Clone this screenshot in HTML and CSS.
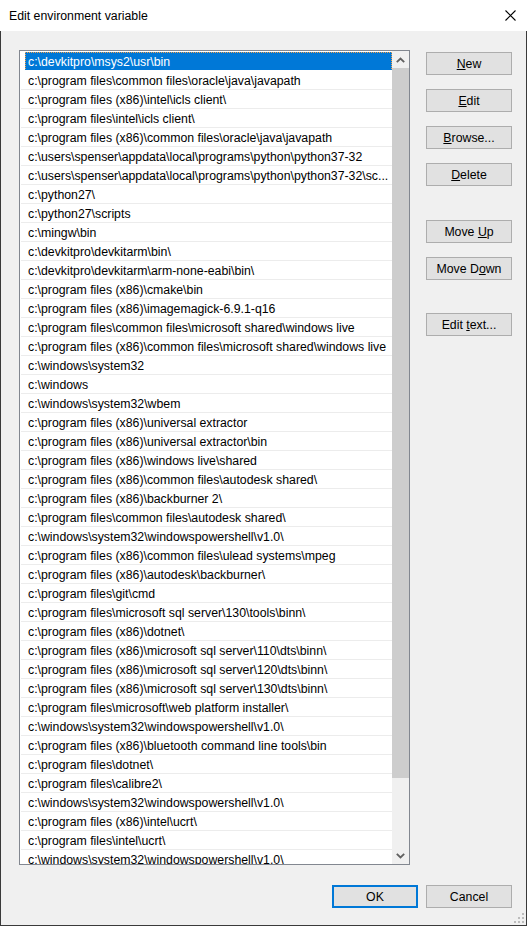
FILE: index.html
```html
<!DOCTYPE html>
<html lang="en">
<head>
  <meta charset="UTF-8" />
  <meta name="viewport" content="width=device-width, initial-scale=1.0" />
  <title>Edit environment variable</title>
  <link rel="stylesheet" href="styles.css">
</head>
<body>
  <div class="window">
    <div class="titlebar">
      <span class="title">Edit environment variable</span>
      <span class="close">
        <svg width="11" height="11" viewBox="0 0 11 11"><path d="M0.5 0.5 L10.5 10.5 M10.5 0.5 L0.5 10.5" stroke="#000" stroke-width="1.1" fill="none"/></svg>
      </span>
    </div>
    <div class="dialog">
      <div class="main">
        <div class="listbox">
          <div class="items">
            <div class="row selected"><div class="cell">c:\devkitpro\msys2\usr\bin</div></div>
            <div class="row"><div class="cell">c:\program files\common files\oracle\java\javapath</div></div>
            <div class="row"><div class="cell">c:\program files (x86)\intel\icls client\</div></div>
            <div class="row"><div class="cell">c:\program files\intel\icls client\</div></div>
            <div class="row"><div class="cell">c:\program files (x86)\common files\oracle\java\javapath</div></div>
            <div class="row"><div class="cell">c:\users\spenser\appdata\local\programs\python\python37-32</div></div>
            <div class="row"><div class="cell">c:\users\spenser\appdata\local\programs\python\python37-32\sc...</div></div>
            <div class="row"><div class="cell">c:\python27\</div></div>
            <div class="row"><div class="cell">c:\python27\scripts</div></div>
            <div class="row"><div class="cell">c:\mingw\bin</div></div>
            <div class="row"><div class="cell">c:\devkitpro\devkitarm\bin\</div></div>
            <div class="row"><div class="cell">c:\devkitpro\devkitarm\arm-none-eabi\bin\</div></div>
            <div class="row"><div class="cell">c:\program files (x86)\cmake\bin</div></div>
            <div class="row"><div class="cell">c:\program files (x86)\imagemagick-6.9.1-q16</div></div>
            <div class="row"><div class="cell">c:\program files\common files\microsoft shared\windows live</div></div>
            <div class="row"><div class="cell">c:\program files (x86)\common files\microsoft shared\windows live</div></div>
            <div class="row"><div class="cell">c:\windows\system32</div></div>
            <div class="row"><div class="cell">c:\windows</div></div>
            <div class="row"><div class="cell">c:\windows\system32\wbem</div></div>
            <div class="row"><div class="cell">c:\program files (x86)\universal extractor</div></div>
            <div class="row"><div class="cell">c:\program files (x86)\universal extractor\bin</div></div>
            <div class="row"><div class="cell">c:\program files (x86)\windows live\shared</div></div>
            <div class="row"><div class="cell">c:\program files (x86)\common files\autodesk shared\</div></div>
            <div class="row"><div class="cell">c:\program files (x86)\backburner 2\</div></div>
            <div class="row"><div class="cell">c:\program files\common files\autodesk shared\</div></div>
            <div class="row"><div class="cell">c:\windows\system32\windowspowershell\v1.0\</div></div>
            <div class="row"><div class="cell">c:\program files (x86)\common files\ulead systems\mpeg</div></div>
            <div class="row"><div class="cell">c:\program files (x86)\autodesk\backburner\</div></div>
            <div class="row"><div class="cell">c:\program files\git\cmd</div></div>
            <div class="row"><div class="cell">c:\program files\microsoft sql server\130\tools\binn\</div></div>
            <div class="row"><div class="cell">c:\program files (x86)\dotnet\</div></div>
            <div class="row"><div class="cell">c:\program files (x86)\microsoft sql server\110\dts\binn\</div></div>
            <div class="row"><div class="cell">c:\program files (x86)\microsoft sql server\120\dts\binn\</div></div>
            <div class="row"><div class="cell">c:\program files (x86)\microsoft sql server\130\dts\binn\</div></div>
            <div class="row"><div class="cell">c:\program files\microsoft\web platform installer\</div></div>
            <div class="row"><div class="cell">c:\windows\system32\windowspowershell\v1.0\</div></div>
            <div class="row"><div class="cell">c:\program files (x86)\bluetooth command line tools\bin</div></div>
            <div class="row"><div class="cell">c:\program files\dotnet\</div></div>
            <div class="row"><div class="cell">c:\program files\calibre2\</div></div>
            <div class="row"><div class="cell">c:\windows\system32\windowspowershell\v1.0\</div></div>
            <div class="row"><div class="cell">c:\program files (x86)\intel\ucrt\</div></div>
            <div class="row"><div class="cell">c:\program files\intel\ucrt\</div></div>
            <div class="row"><div class="cell">c:\windows\system32\windowspowershell\v1.0\</div></div>
          </div>
          <div class="scrollbar">
            <div class="arrow">
              <svg width="9" height="6" viewBox="0 0 9 6"><path d="M0.8 5.2 L4.5 1.5 L8.2 5.2" stroke="#606060" stroke-width="1.8" fill="none"/></svg>
            </div>
            <div class="track"><div class="thumb"></div></div>
            <div class="arrow">
              <svg width="9" height="6" viewBox="0 0 9 6"><path d="M0.8 0.8 L4.5 4.5 L8.2 0.8" stroke="#606060" stroke-width="1.8" fill="none"/></svg>
            </div>
          </div>
        </div>
        <div class="side">
          <div class="group">
            <button class="btn"><u>N</u>ew</button>
            <button class="btn"><u>E</u>dit</button>
            <button class="btn"><u>B</u>rowse...</button>
            <button class="btn"><u>D</u>elete</button>
          </div>
          <div class="group">
            <button class="btn">Move <u>U</u>p</button>
            <button class="btn">Move D<u>o</u>wn</button>
          </div>
          <div class="group">
            <button class="btn">Edit <u>t</u>ext...</button>
          </div>
        </div>
      </div>
      <div class="footer">
        <button class="btn default">OK</button>
        <button class="btn">Cancel</button>
      </div>
      <div class="grip">
        <svg width="10" height="10" viewBox="0 0 10 10" fill="#bcbcbc">
          <rect x="8" y="0" width="2" height="2"/>
          <rect x="4" y="4" width="2" height="2"/><rect x="8" y="4" width="2" height="2"/>
          <rect x="0" y="8" width="2" height="2"/><rect x="4" y="8" width="2" height="2"/><rect x="8" y="8" width="2" height="2"/>
        </svg>
      </div>
    </div>
  </div>
</body>
</html>
```

FILE: styles.css
```css
* {
  box-sizing: border-box;
}
body {
  margin: 0;
  font-family: "Liberation Sans", Arial, sans-serif;
  font-size: 12.3px;
  color: #000;
  background: #f0f0f0;
}
.window {
  width: 527px;
  height: 926px;
  display: flex;
  flex-direction: column;
  position: relative;
}
.titlebar {
  height: 31px;
  background: #fff;
  display: flex;
  align-items: center;
  justify-content: space-between;
  padding: 1px 11px 0 9px;
}
.title {
  font-size: 12.3px;
}
.close {
  display: flex;
  align-items: center;
  margin-top: -2px;
}
.dialog {
  flex: 1;
  background: #f0f0f0;
  border: 1px solid #3a3a3a;
  border-top: none;
  padding: 19px 14px 0 18px;
  display: flex;
  flex-direction: column;
}
.main {
  display: flex;
}
.listbox {
  width: 391px;
  height: 815px;
  border: 1px solid #828790;
  background: #fff;
  display: flex;
}
.items {
  flex: 1;
  overflow: hidden;
  padding: 1px 0 0 1px;
}
.row {
  height: 19px;
  border-bottom: 1px solid #ececec;
  padding-left: 4px;
  white-space: nowrap;
  overflow: hidden;
}
.cell {
  height: 18px;
  line-height: 20px;
  padding-left: 3px;
}
.row.selected {
  border-bottom-color: #fff;
}
.row.selected .cell {
  height: 19px;
  line-height: 20px;
  background: #0078d7;
  color: #fff;
  outline: 1px dotted #f5a14a;
  outline-offset: -1px;
}
.scrollbar {
  width: 17px;
  background: #f0f0f0;
  display: flex;
  flex-direction: column;
}
.arrow {
  height: 17px;
  display: flex;
  align-items: center;
  justify-content: center;
}
.track {
  flex: 1;
}
.thumb {
  height: 710px;
  background: #cdcdcd;
}
.side {
  margin-left: 16px;
  margin-top: 2px;
  display: flex;
  flex-direction: column;
  gap: 34px;
}
.group {
  display: flex;
  flex-direction: column;
  gap: 14px;
}
.group:last-child {
  margin-top: -1px;
}
.btn {
  width: 86px;
  height: 23px;
  background: #e1e1e1;
  border: 1px solid #adadad;
  font-family: inherit;
  font-size: 12.3px;
  color: #000;
  padding: 1px 0 0;
  text-align: center;
}
.btn u {
  text-decoration-thickness: 1px;
}
.btn.default {
  border: 2px solid #0078d7;
}
.footer {
  display: flex;
  justify-content: flex-end;
  gap: 8px;
  margin-top: 20px;
}
.grip {
  position: absolute;
  right: 3px;
  bottom: 3px;
  display: flex;
}
```
